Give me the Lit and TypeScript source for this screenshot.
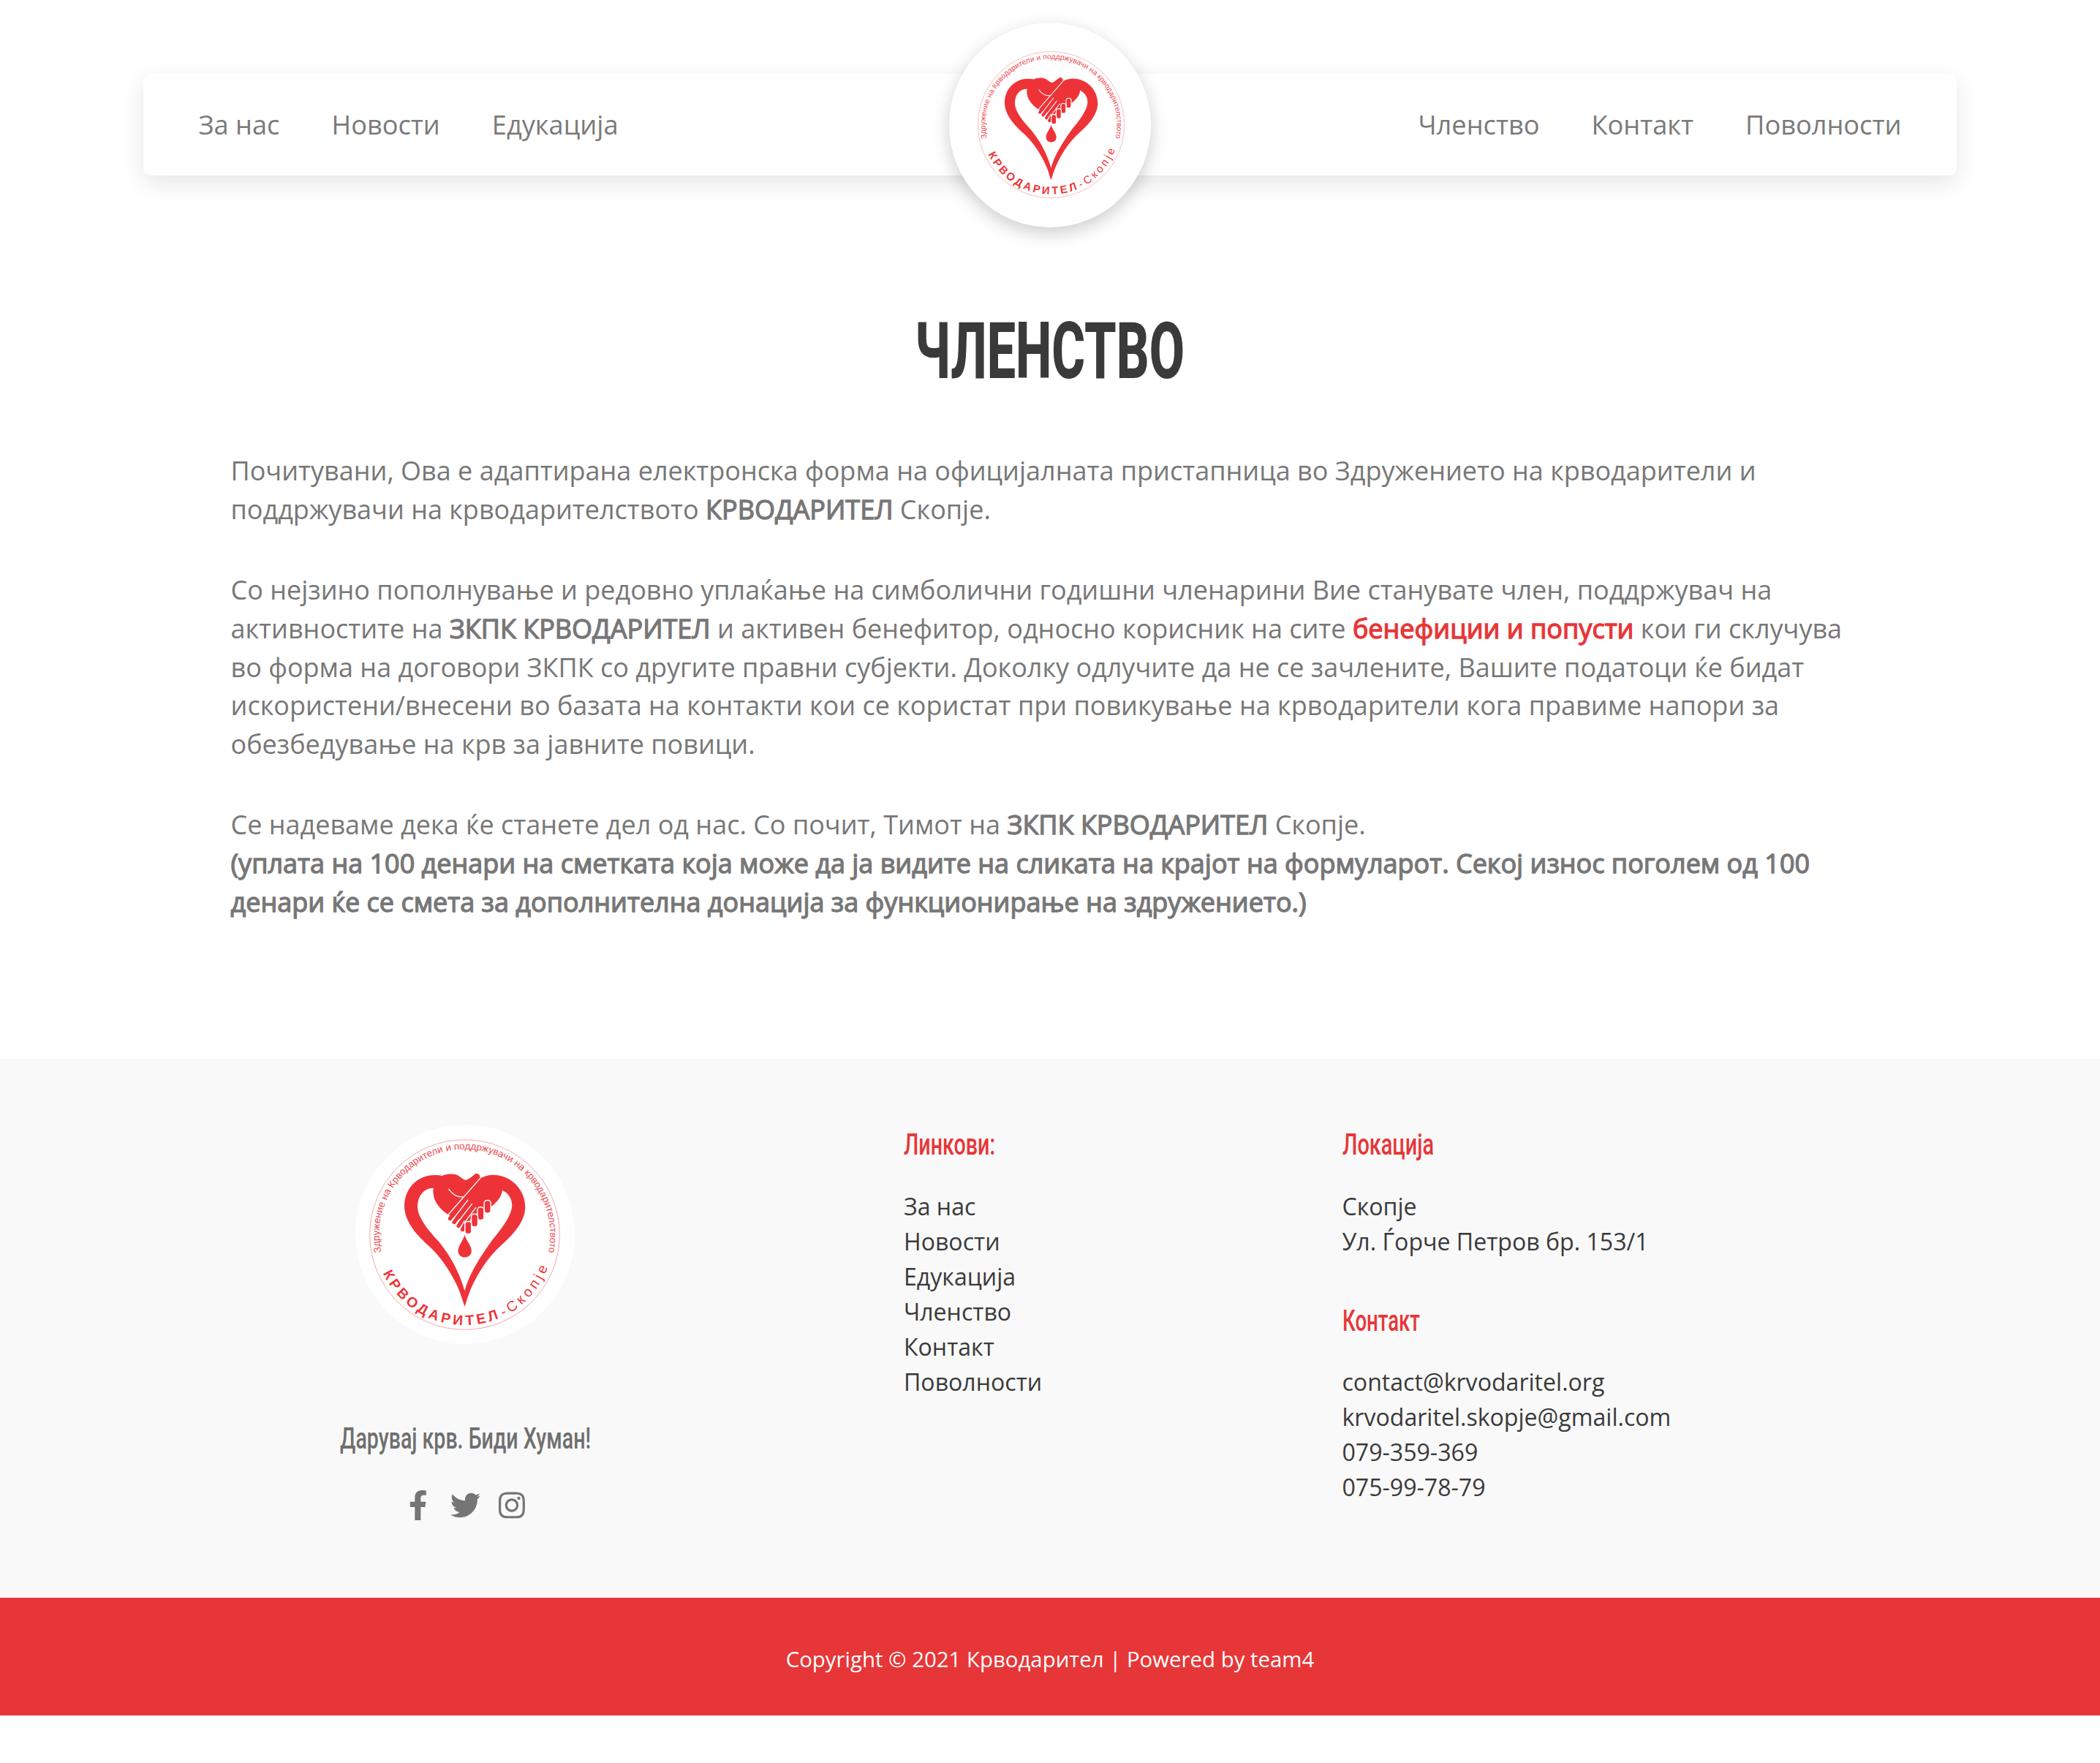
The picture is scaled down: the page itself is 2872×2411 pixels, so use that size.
import { LitElement, html, css } from "lit";

class FitText extends LitElement {
  static properties = {
    text: {},
    width: { type: Number },
    size: { type: Number },
    weight: { type: Number },
    box: { type: Number },
    baseline: { type: Number },
  };
  declare text: string;
  declare width: number;
  declare size: number;
  declare weight: number;
  declare box: number;
  declare baseline: number;
  static styles = css`
    :host { display: block; }
    .line { display: block; overflow: visible; }
    .glyphs { font-family: Roboto, sans-serif; fill: currentColor; }
  `;
  render() {
    return html`<svg class="line" width=${this.width} height=${this.box}>
      <text class="glyphs" x="0" y=${this.baseline} font-size=${this.size} font-weight=${this.weight}
        textLength=${this.width} lengthAdjust="spacingAndGlyphs">${this.text}</text>
    </svg>`;
  }
}
customElements.define("fit-text", FitText);

class HeartLogo extends LitElement {
  static styles = css`
    :host { display: block; }
    .art { display: block; width: 100%; height: 100%; }
    .ring { fill: none; stroke: #f59a9d; stroke-width: 2.6; }
    .red { fill: #ee3338; }
    .finger { stroke: #ee3338; stroke-width: 16; stroke-linecap: round; fill: none; }
    .gap { stroke: #fff; stroke-width: 4; stroke-linecap: round; fill: none; }
    .knuckle { fill: #ee3338; stroke: #fff; stroke-width: 4.5; }
    .small { font: 40px "Liberation Sans", Arial, sans-serif; fill: #ee4a4f; }
    .bold { font: 700 58px "Liberation Sans", Arial, sans-serif; fill: #ee3338; }
    .plain { font: 58px "Liberation Sans", Arial, sans-serif; fill: #ee3338; }
  `;
  render() {
    return html`<svg class="art" viewBox="137 142 782 782">
      <defs>
        <path id="top" d="M185.5 605 A350 350 0 1 1 873 592 L868 640" />
        <path id="bottom" d="M193 690 A370 370 0 0 0 668 876" />
        <path id="town" d="M686 870 A370 370 0 0 0 868 668" />
      </defs>
      <circle class="ring" cx="528" cy="533" r="389" />
      <path class="red" fill-rule="evenodd" d="M528 828 C516 792 510 765 486 720 C458 668 430 625 380 578
        C335 538 281 480 281 417 C281 340 338 289 405 289 C418 289 428 290 436 292 C450 284 484 280 503 292
        C516 300 524 310 534 309 C546 306 558 293 571 284 C581 279 593 287 590 298 L594 301
        C611 292 628 288 645 288 C716 288 776 346 776 420 C776 480 725 535 676 578 C626 625 598 668 570 720
        C546 765 540 792 528 828 Z
        M400 342 C360 342 335 375 335 420 C336 460 375 512 421 560 C470 620 508 690 528 764
        C543 704 580 640 636 562 C670 520 722 458 722 412 C722 384 706 362 681 350
        L681 352 C680 376 662 396 640 414 L606 380 L545 482 L462 452 C428 430 392 392 400 342 Z" />
      <path class="red" d="M592 340 L682 350 C680 376 662 397 636 419 L560 480 L530 440 Z" />
      <path class="finger" d="M580 338 L468 467 M580 354 L485 482 M580 370 L503 497 M580 396 L519 512" />
      <path class="gap" d="M459 453 L592 301" />
      <path class="gap" d="M463 347 C480 371 500 380 521 378" />
      <path class="gap" d="M541 391 L475 476 M558 407 L493 491 M574 422 L510 506" />
      <path class="red" d="M525 480 l-12 30 c-1 8 7 11 12 8z" />
      <rect class="knuckle" x="608" y="392" width="27" height="53" rx="12" />
      <rect class="knuckle" x="580" y="420" width="27" height="53" rx="12" />
      <rect class="knuckle" x="555" y="448" width="27" height="53" rx="12" />
      <rect class="knuckle" x="529" y="479" width="27" height="51" rx="11" />
      <path class="red" d="M528 534 C533 555 556 579 556 599 C556 635 501 635 501 599 C501 579 523 555 528 534 Z" />
      <text class="small"><textPath href="#top" textLength="1245">Здружение на Крводарители и поддржувачи на крводарителството</textPath></text>
      <text class="bold"><textPath href="#bottom" textLength="563">КРВОДАРИТЕЛ</textPath></text>
      <text class="plain"><textPath href="#town" textLength="280">-Скопје</textPath></text>
    </svg>`;
  }
}
customElements.define("heart-logo", HeartLogo);

const LEFT = ["За нас", "Новости", "Едукација"];
const RIGHT = ["Членство", "Контакт", "Поволности"];

class AppRoot extends LitElement {
  static styles = css`
    :host { display: block; min-height: 2411px; background: #fff; color: #777; font-family: "Open Sans", sans-serif; }
    .header { box-sizing: border-box; width: 2480px; height: 139px; margin: 0 auto; padding: 0 75.5px; border-radius: 10px;
      display: grid; grid-template-columns: 1fr 276px 1fr; align-items: center; background: #fff;
      box-shadow: 0 10px 32px rgba(0, 0, 0, 0.1); }
    .page { padding-top: 101px; }
    .menu { display: flex; gap: 71px; padding-bottom: 2px; font-size: 36.2px; color: #7a7a7a; white-space: nowrap; }
    .menu.end { justify-content: flex-end; }
    .badge { width: 276px; height: 280px; border-radius: 50%; background: #fff; display: flex; align-items: center;
      justify-content: center; box-shadow: 0 8px 24px rgba(0, 0, 0, 0.2); margin: -70px 0; }
    .badge heart-logo { width: 201px; height: 201px; margin: 0 0 2px 2px; }
    .title { display: flex; justify-content: center; margin: 0; padding: 177px 2px 0 0; color: #3a3a3a; }
    .text { box-sizing: border-box; padding: 49px 0 0 315.5px; height: 879px; font-size: 36px; line-height: 52.75px; white-space: nowrap; }
    .text p { margin: 0 0 57.6px; }
    .strong { -webkit-text-stroke: 1.3px currentColor; }
    .accent { color: #e73638; }
    .footer { box-sizing: border-box; height: 737px; padding: 90px 0 0 336px; background: #f9f9f9; display: grid;
      grid-template-columns: 900px 599.5px 1fr; align-items: start; }
    .brand { width: 600px; display: flex; flex-direction: column; align-items: center; color: #6f6f6f; }
    .disc { width: 300px; height: 300px; border-radius: 50%; background: #fff; display: flex; align-items: center; justify-content: center; }
    .disc heart-logo { width: 261px; height: 261px; margin-right: 2px; }
    .slogan { padding-top: 80px; }
    .social { display: flex; padding-top: 24px; color: #757575; }
    .cell { width: 64px; display: flex; justify-content: center; }
    .cell svg { height: 41px; fill: currentColor; }
    .heading { color: #e73638; }
    .list { font-size: 32.1px; line-height: 47.9px; color: #3a3a3a; white-space: nowrap; }
    .second { margin-top: 57px; }
    .copy { box-sizing: border-box; height: 161px; padding-top: 6px; background: #e73638; color: #fff; font-size: 29.4px;
      display: flex; align-items: center; justify-content: center; }
  `;
  render() {
    return html`<div class="page">
      <header class="header">
        <nav class="menu">${LEFT.map((t) => html`<span>${t}</span>`)}</nav>
        <div class="badge"><heart-logo></heart-logo></div>
        <nav class="menu end">${RIGHT.map((t) => html`<span>${t}</span>`)}</nav>
      </header>
      <h1 class="title"><fit-text text="ЧЛЕНСТВО" width="369" size="107" weight="800" box="152" baseline="100"></fit-text></h1>
      <main class="text">
        <p>Почитувани, Ова е адаптирана електронска форма на официјалната пристапница во Здружението на крводарители и<br>поддржувачи на крводарителството <span class="strong">КРВОДАРИТЕЛ</span> Скопје.</p>
        <p>Со нејзино пополнување и редовно уплаќање на симболични годишни членарини Вие станувате член, поддржувач на<br>активностите на <span class="strong">ЗКПК КРВОДАРИТЕЛ</span> и активен бенефитор, односно корисник на сите <span class="strong accent">бенефиции и попусти</span> кои ги склучува<br>во форма на договори ЗКПК со другите правни субјекти. Доколку одлучите да не се зачлените, Вашите податоци ќе бидат<br>искористени/внесени во базата на контакти кои се користат при повикување на крводарители кога правиме напори за<br>обезбедување на крв за јавните повици.</p>
        <p>Се надеваме дека ќе станете дел од нас. Со почит, Тимот на <span class="strong">ЗКПК КРВОДАРИТЕЛ</span> Скопје.<br><span class="strong">(уплата на 100 денари на сметката која може да ја видите на сликата на крајот на формуларот. Секој износ поголем од 100<br>денари ќе се смета за дополнителна донација за функционирање на здружението.)</span></p>
      </main>
      <footer class="footer">
        <div class="brand">
          <div class="disc"><heart-logo></heart-logo></div>
          <fit-text class="slogan" text="Дарувај крв. Биди Хуман!" width="343" size="40.6" weight="500" box="96" baseline="63"></fit-text>
          <div class="social">
            <span class="cell"><svg viewBox="0 0 320 512"><path d="M279.14 288l14.22-92.66h-88.91v-60.13c0-25.35 12.42-50.06 52.24-50.06h40.42V6.26S260.43 0 225.36 0c-73.22 0-121.08 44.38-121.08 124.72v70.62H22.89V288h81.39v224h100.17V288z"/></svg></span>
            <span class="cell"><svg viewBox="0 0 512 512"><path d="M459.37 151.716c.325 4.548.325 9.097.325 13.645 0 138.72-105.583 298.558-298.558 298.558-59.452 0-114.68-17.219-161.137-47.106 8.447.974 16.568 1.299 25.34 1.299 49.055 0 94.213-16.568 130.274-44.832-46.132-.975-84.792-31.188-98.112-72.772 6.498.974 12.995 1.624 19.818 1.624 9.421 0 18.843-1.3 27.614-3.573-48.081-9.747-84.143-51.98-84.143-102.985v-1.299c13.969 7.797 30.214 12.67 47.431 13.319-28.264-18.843-46.781-51.005-46.781-87.391 0-19.492 5.197-37.36 14.294-52.954 51.655 63.675 129.3 105.258 216.365 109.807-1.624-7.797-2.599-15.918-2.599-24.04 0-57.828 46.782-104.934 104.934-104.934 30.213 0 57.502 12.67 76.67 33.137 23.715-4.548 46.456-13.32 66.599-25.34-7.798 24.366-24.366 44.833-46.132 57.827 21.117-2.273 41.584-8.122 60.426-16.243-14.292 20.791-32.161 39.308-52.628 54.253z"/></svg></span>
            <span class="cell"><svg viewBox="0 0 448 512"><path d="M224.1 141c-63.6 0-114.9 51.3-114.9 114.9s51.3 114.9 114.9 114.9S339 319.5 339 255.9 287.7 141 224.1 141zm0 189.6c-41.1 0-74.7-33.5-74.7-74.7s33.5-74.7 74.7-74.7 74.7 33.5 74.7 74.7-33.6 74.7-74.7 74.7zm146.4-194.3c0 14.9-12 26.8-26.8 26.8-14.9 0-26.8-12-26.8-26.8s12-26.8 26.8-26.8 26.8 12 26.8 26.8zm76.1 27.2c-1.7-35.9-9.9-67.7-36.2-93.9-26.2-26.2-58-34.4-93.9-36.2-37-2.1-147.9-2.1-184.9 0-35.8 1.7-67.6 9.9-93.9 36.1s-34.4 58-36.2 93.9c-2.1 37-2.1 147.9 0 184.9 1.7 35.9 9.9 67.7 36.2 93.9s58 34.4 93.9 36.2c37 2.1 147.9 2.1 184.9 0 35.9-1.7 67.7-9.9 93.9-36.2 26.2-26.2 34.4-58 36.2-93.9 2.1-37 2.1-147.8 0-184.8zM398.8 388c-7.8 19.6-22.9 34.7-42.6 42.6-29.5 11.7-99.5 9-132.1 9s-102.7 2.6-132.1-9c-19.6-7.8-34.7-22.9-42.6-42.6-11.7-29.5-9-99.5-9-132.1s-2.6-102.7 9-132.1c7.8-19.6 22.9-34.7 42.6-42.6 29.5-11.7 99.5-9 132.1-9s102.7-2.6 132.1 9c19.6 7.8 34.7 22.9 42.6 42.6 11.7 29.5 9 99.5 9 132.1s2.7 102.7-9 132.1z"/></svg></span>
          </div>
        </div>
        <div>
          <fit-text class="heading" text="Линкови:" width="125" size="40.6" weight="500" box="88" baseline="40.5"></fit-text>
          <div class="list">${[...LEFT, ...RIGHT].map((t) => html`<div>${t}</div>`)}</div>
        </div>
        <div>
          <fit-text class="heading" text="Локација" width="125" size="40.6" weight="500" box="88" baseline="40.5"></fit-text>
          <div class="list"><div>Скопје</div><div>Ул. Ѓорче Петров бр. 153/1</div></div>
          <fit-text class="heading second" text="Контакт" width="106" size="40.6" weight="500" box="87" baseline="41"></fit-text>
          <div class="list"><div>contact@krvodaritel.org</div><div>krvodaritel.skopje@gmail.com</div><div>079-359-369</div><div>075-99-78-79</div></div>
        </div>
      </footer>
      <div class="copy">Copyright © 2021 Крводарител | Powered by team4</div>
    </div>`;
  }
}
customElements.define("app-root", AppRoot);
